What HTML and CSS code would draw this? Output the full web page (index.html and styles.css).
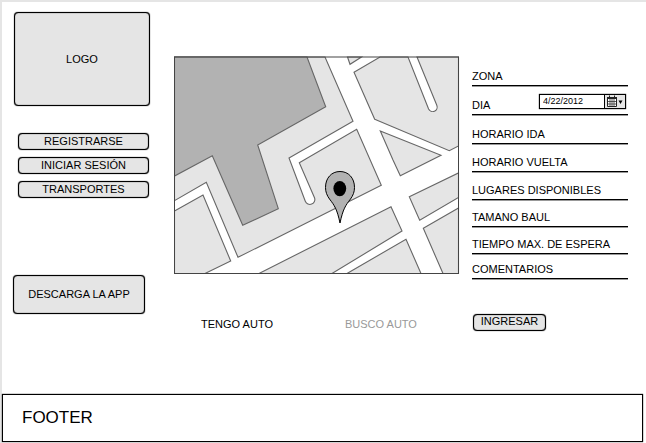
FILE: index.html
```html
<!DOCTYPE html>
<html lang="es">
<head>
<meta charset="utf-8">
<title>Auto compartido</title>
<link rel="stylesheet" href="styles.css">
</head>
<body>
<div class="page">
  <main class="main">
    <aside class="sidebar">
      <div class="box logo">LOGO</div>
      <nav class="menu">
        <button class="box button" type="button">REGISTRARSE</button>
        <button class="box button" type="button">INICIAR SESIÓN</button>
        <button class="box button" type="button">TRANSPORTES</button>
      </nav>
      <button class="box download" type="button">DESCARGA LA APP</button>
    </aside>

    <section class="center">
      <svg class="map" viewBox="174 56 286 218" role="img" aria-label="Mapa">
        <rect x="174" y="56" width="286" height="218" fill="#fff"/>
        <g fill="#e5e5e5" stroke="#666" stroke-width="1.1">
          <path d="M174.500 57H325l28 64.300L289 158l16.300 43.300a4.900 4.900 0 0 0 9.200-3.600L299.300 162.700L356.700 129.300L381.300 185.300L238 257.300L206.300 182.300L174.500 200.700Z"/>
          <path d="M174.500 211L203 195L230.700 261L205 273.500H174.500Z"/>
          <path d="M259 273.500L391 206.700L402 231L332 273.500Z"/>
          <path d="M347 273.500L406 239.300L421 273.500Z"/>
          <path d="M443 273.500L423.300 228.300L458.500 208V273.500Z"/>
          <path d="M409.300 196.700L458.500 173V197.500L419.700 220.300Z"/>
          <path d="M380.300 131L441 155.300L400.300 175.700L393 160Z"/>
          <path d="M374.700 119.300L449.300 150.700L458.500 146V57H417L436.800 105.300a4.500 4.500 0 0 1-8.200 3.700L408 57H380L354 72.300Z"/>
          <path d="M347.500 57H361.500L350 64.300Z"/>
          <path fill="#b2b2b2" d="M174.500 57H307L325.700 106.700L257.700 145L278.300 208.700L242.700 225.300L212.300 155.700L174.500 176Z"/>
        </g>
        <rect x="174.500" y="57" width="284" height="216.500" fill="none" stroke="#444"/>
        <path d="M340 223C337 209 334.500 205.500 329.500 199C327 195.500 325.500 192 325.500 187.500C325.500 178 331.500 171.500 340 171.500S354.500 178 354.500 187.500C354.500 192 353 195.500 350.500 199C345.500 205.500 343 209 340 223Z" fill="#b2b2b2" stroke="#000"/>
        <ellipse cx="339.800" cy="188.600" rx="6.400" ry="7.600"/>
      </svg>
      <div class="modes">
        <button class="mode" type="button">TENGO AUTO</button>
        <button class="mode mode-off" type="button">BUSCO AUTO</button>
      </div>
    </section>

    <form class="form">
      <div class="fields">
        <div class="field"><label for="zona">ZONA</label><input id="zona" type="text"></div>
        <div class="field">
          <label for="dia">DIA</label>
          <div class="date">
            <input id="dia" type="text" value="4/22/2012">
            <button class="picker" type="button" aria-label="Abrir calendario">
              <svg width="19" height="13" viewBox="0 0 19 13">
                <path d="M2.500 2.500h9v9h-9z" fill="#fff" stroke="#222"/>
                <path d="M2 2h10v2H2zM4 .5h1V3H4zM9 .5h1V3H9z" fill="#222"/>
                <path d="M3 6.500h8M3 9h8M5 4v7M7 4v7M9 4v7" stroke="#333" stroke-width=".8"/>
                <path d="M13.500 5.500h4L15.500 9z"/>
              </svg>
            </button>
          </div>
        </div>
        <div class="field"><label for="ida">HORARIO IDA</label><input id="ida" type="text"></div>
        <div class="field"><label for="vuelta">HORARIO VUELTA</label><input id="vuelta" type="text"></div>
        <div class="field"><label for="lugares">LUGARES DISPONIBLES</label><input id="lugares" type="text"></div>
        <div class="field"><label for="baul">TAMANO BAUL</label><input id="baul" type="text"></div>
        <div class="field"><label for="espera">TIEMPO MAX. DE ESPERA</label><input id="espera" type="text"></div>
        <div class="field"><label for="comentarios">COMENTARIOS</label><input id="comentarios" type="text"></div>
      </div>
      <button class="box submit" type="submit">INGRESAR</button>
    </form>
  </main>
  <footer class="footer">FOOTER</footer>
</div>
</body>
</html>
```
FILE: styles.css
```css
* {
  box-sizing: border-box;
}

body {
  margin: 0;
  background: #fff;
  color: #000;
  font: 11px/13px "Liberation Sans", Arial, sans-serif;
}

button,
input {
  margin: 0;
  padding: 0;
  border: 0;
  background: none;
  color: inherit;
  font: inherit;
}

.page {
  display: flex;
  flex-direction: column;
  min-height: 100vh;
  padding: 0 3px 1px 0;
  border-top: 2px solid #e5e5e5;
  border-left: 2px solid #e5e5e5;
}

.main {
  flex: 1;
  display: grid;
  grid-template-columns: 138px 1fr 156px;
  column-gap: 12px;
  padding: 10px 15px 24px 10px;
}

.box {
  border: 1px solid #000;
  border-radius: 4px;
  background: #e5e5e5;
  box-shadow: 0 0 1px #000, inset 0 0 1px #000;
  text-align: center;
}

.sidebar {
  display: flex;
  flex-direction: column;
}

.logo {
  display: flex;
  align-items: center;
  justify-content: center;
  height: 94px;
  margin-left: 2px;
}

.menu {
  display: flex;
  flex-direction: column;
  gap: 7px;
  margin: 27px 1px 77px 6px;
}

.button {
  height: 17px;
}

.download {
  height: 39px;
  margin: 0 5px 0 1px;
}

.center {
  padding: 44px 0 0 12px;
}

.map {
  display: block;
  width: 100%;
  height: auto;
}

.modes {
  display: flex;
  justify-content: center;
  gap: 72px;
  margin-top: 44px;
  padding-right: 16px;
}

.mode-off {
  color: #999;
}

.form {
  padding-top: 45px;
}

.fields {
  display: grid;
  grid-template-columns: minmax(0, 1fr);
  grid-template-rows: repeat(3, 29px) repeat(2, 28px) repeat(2, 27px) 25px;
}

.field {
  display: flex;
  align-items: flex-end;
  gap: 4px;
  padding-bottom: 2px;
  border-bottom: 1px solid #000;
  box-shadow: 0 1px 0 #999;
}

.field > input {
  flex: 1;
  width: 0;
}

.date {
  display: flex;
  width: 87px;
  height: 15px;
  margin: 0 2px 3px auto;
  border: 1px solid #000;
  box-shadow: 0 0 1px #000;
}

.date input {
  flex: 1;
  width: 0;
  padding-left: 3px;
  font-size: 9px;
}

.picker {
  display: flex;
  width: 21px;
  border-left: 1px solid #000;
  background: #e5e5e5;
}

.submit {
  width: 73px;
  height: 17px;
  margin: 35px 0 0 1px;
  padding-bottom: 2px;
}

.footer {
  height: 48px;
  padding: 0 19px;
  border: 1px solid #000;
  box-shadow: 0 0 1px #000;
  font-size: 17px;
  line-height: 46px;
}
```
